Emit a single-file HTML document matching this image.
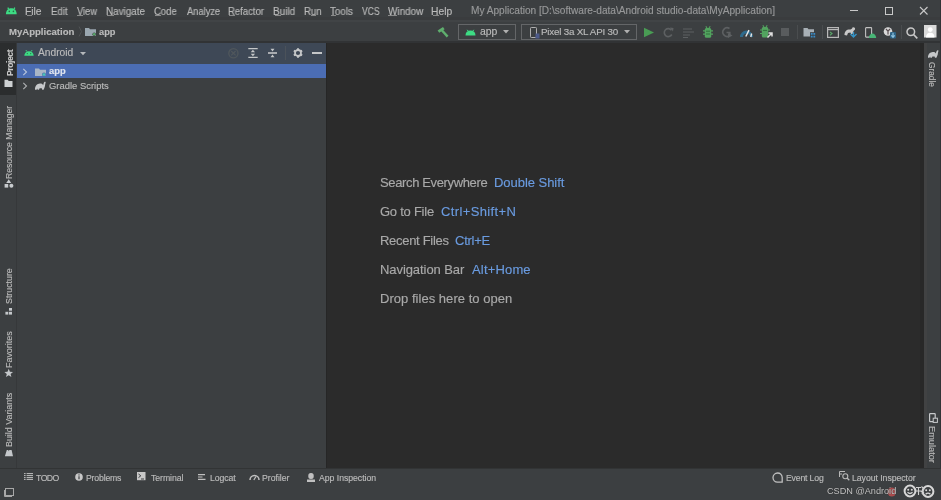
<!DOCTYPE html>
<html><head><meta charset="utf-8">
<style>
*{margin:0;padding:0;box-sizing:border-box}
html,body{width:941px;height:500px;overflow:hidden;background:#3c3f41;font-family:"Liberation Sans",sans-serif;color:#bbbbbb;position:relative}
.a{position:absolute}
.t{position:absolute;white-space:nowrap;line-height:1;will-change:transform;-webkit-text-stroke:0.15px currentColor}
svg{position:absolute;overflow:visible}
.vt{position:absolute;white-space:nowrap;line-height:1;transform-origin:0 0}
#tx38{-webkit-text-stroke:0;text-shadow:0 0 1px #222}
</style></head><body>
<!-- ===== title + menu bar ===== -->
<div class="a" style="left:0;top:0;width:941px;height:20px;background:#3c3f41"></div>
<div class="a" style="left:0;top:17px;width:941px;height:3px;background:#3a3c3e"></div>
<div class="a" style="left:0;top:20px;width:941px;height:2px;background:#414446"></div>
<svg style="left:5px;top:6px" width="13" height="9" viewBox="0 0 13 9">
<path d="M0.9 8.2 C1.1 4.6 2.8 2.3 6.3 2.3 C9.8 2.3 11.5 4.6 11.7 8.2 Z" fill="#3ddc84"/>
<path d="M2.7 1.6 L3.7 2.9 M9.9 1.6 L8.9 2.9" stroke="#3ddc84" stroke-width="1.3"/>
<circle cx="4.3" cy="5.4" r="0.8" fill="#2a6e48"/><circle cx="8.4" cy="5.4" r="0.8" fill="#2a6e48"/>
</svg>
<!-- mnemonic underlines -->
<div class="a" style="left:26.5px;top:15px;width:5px;height:1px;background:#8a8a8a"></div>
<div class="a" style="left:77px;top:15px;width:6px;height:1px;background:#8a8a8a"></div>
<div class="a" style="left:106.5px;top:15px;width:7px;height:1px;background:#8a8a8a"></div>
<div class="a" style="left:154.5px;top:15px;width:6px;height:1px;background:#8a8a8a"></div>
<div class="a" style="left:228.8px;top:15px;width:6px;height:1px;background:#8a8a8a"></div>
<div class="a" style="left:274.5px;top:15px;width:6px;height:1px;background:#8a8a8a"></div>
<div class="a" style="left:311px;top:15px;width:5px;height:1px;background:#8a8a8a"></div>
<div class="a" style="left:330.5px;top:15px;width:5px;height:1px;background:#8a8a8a"></div>
<div class="a" style="left:388.3px;top:15px;width:9px;height:1px;background:#8a8a8a"></div>
<div class="a" style="left:432.5px;top:15px;width:6px;height:1px;background:#8a8a8a"></div>
<!-- window controls -->
<div class="a" style="left:850px;top:10px;width:8px;height:1px;background:#c8c8c8"></div>
<div class="a" style="left:884.5px;top:6.8px;width:8px;height:7.8px;border:1.2px solid #c8c8c8"></div>
<svg style="left:919.5px;top:7px" width="7.5" height="7.5" viewBox="0 0 7.5 7.5"><path d="M0 0 L7.5 7.5 M7.5 0 L0 7.5" stroke="#c8c8c8" stroke-width="1.1"/></svg>

<!-- ===== navbar/toolbar ===== -->
<div class="a" style="left:0;top:41px;width:941px;height:2px;background:#313335"></div>
<svg style="left:78px;top:26px" width="5" height="11" viewBox="0 0 5 11"><path d="M1 0.5 L3.5 5.5 L1 10.5" stroke="#505355" stroke-width="1" fill="none"/></svg>
<svg style="left:85px;top:27px" width="12" height="10" viewBox="0 0 12 10">
<path d="M0 1 H4 L5 2.2 H11 V9 H0 Z" fill="#9aa7b0"/>
<circle cx="9.2" cy="7.3" r="1.8" fill="#3c3f41"/><circle cx="9.2" cy="7.3" r="1.3" fill="#59a869"/>
</svg>
<!-- hammer -->
<svg style="left:437px;top:26px" width="13" height="12" viewBox="0 0 13 12">
<path d="M0.6 4.6 L6 1 L7.6 3.2 L2.2 6.8 Z" fill="#5fae6e"/><path d="M4.6 4 L10.6 10.6" stroke="#5fae6e" stroke-width="2.4"/>
</svg>
<!-- app combo -->
<div class="a" style="left:458px;top:24px;width:58px;height:16px;border:1px solid #646668"></div>
<svg style="left:465px;top:29px" width="11" height="7" viewBox="0 0 11 7">
<path d="M0.5 6.5 C0.5 3.3 2.5 1.5 5.5 1.5 C8.5 1.5 10.5 3.3 10.5 6.5 Z" fill="#3ddc84"/>
<path d="M2.2 0.8 L3.1 2.1 M8.8 0.8 L7.9 2.1" stroke="#3ddc84" stroke-width="1"/>
</svg>
<svg style="left:503px;top:30px" width="6" height="4" viewBox="0 0 6 4"><path d="M0 0 H6 L3 3.5 Z" fill="#b0b0b0"/></svg>
<!-- device combo -->
<div class="a" style="left:521px;top:24px;width:116px;height:16px;border:1px solid #646668"></div>
<svg style="left:530px;top:27px" width="10" height="12" viewBox="0 0 10 12">
<rect x="0.5" y="0.5" width="6" height="10" rx="0.8" fill="none" stroke="#b0b0b0" stroke-width="1"/>
<rect x="5.5" y="6.5" width="4" height="5" fill="#4d5a8a"/>
</svg>
<svg style="left:624px;top:30px" width="6" height="4" viewBox="0 0 6 4"><path d="M0 0 H6 L3 3.5 Z" fill="#b0b0b0"/></svg>
<!-- run toolbar icons -->
<svg style="left:643px;top:27px" width="12" height="11" viewBox="0 0 12 11"><path d="M1 0.8 L11 5.5 L1 10.2 Z" fill="#499c54"/></svg>
<svg style="left:663px;top:27px" width="11" height="11" viewBox="0 0 11 11"><path d="M8.5 3.2 A4 4 0 1 0 8.8 7.5" stroke="#5d6062" stroke-width="1.6" fill="none"/><path d="M7 0.5 L10.5 1 L10 4.5 Z" fill="#5d6062"/></svg>
<svg style="left:683px;top:28px" width="11" height="10" viewBox="0 0 11 10"><path d="M0 1 H9 M0 4 H11 M0 7 H7 M0 9.5 H5" stroke="#5d6062" stroke-width="1.2"/></svg>
<svg style="left:703px;top:26px" width="10" height="12" viewBox="0 0 10 12">
<path d="M2.8 0.3 L4 2 M7.2 0.3 L6 2" stroke="#52a35f" stroke-width="1.1"/>
<rect x="1.8" y="2" width="6.4" height="9.8" rx="1.5" fill="#52a35f"/>
<path d="M0 4.8 H10 M0 8.2 H10" stroke="#52a35f" stroke-width="1.2"/>
<path d="M3 5.2 H7 M3 8 H7" stroke="#2f6a3a" stroke-width="0.9"/>
</svg>
<svg style="left:721px;top:27px" width="12" height="11" viewBox="0 0 12 11">
<path d="M8.5 1.5 A4.3 4.3 0 1 0 8.8 8.5 V5.5 H5.5" stroke="#5d6062" stroke-width="1.6" fill="none"/>
<path d="M7 6 L11.5 8.5 L7 11 Z" fill="#5d6062"/>
</svg>
<svg style="left:740px;top:27px" width="13" height="10" viewBox="0 0 13 10">
<path d="M1.5 10 A5 5 0 0 1 11.5 10" stroke="#2e6a8c" stroke-width="3" fill="none"/>
<path d="M5.8 9.5 L9 3.2" stroke="#e6e6e6" stroke-width="1.5"/>
<path d="M10.8 10 L11.6 6.5" stroke="#e6e6e6" stroke-width="1.4"/>
</svg>
<svg style="left:760px;top:25px" width="13" height="13" viewBox="0 0 13 13">
<path d="M2.8 0.3 L4 2 M7.2 0.3 L6 2" stroke="#52a35f" stroke-width="1.1"/>
<rect x="1.8" y="2" width="6.4" height="10.5" rx="1.5" fill="#52a35f"/>
<path d="M0 5 H10 M0 8.5 H7" stroke="#52a35f" stroke-width="1.2"/>
<path d="M3 5.4 H7" stroke="#2f6a3a" stroke-width="0.9"/>
<path d="M7.5 12.5 L11.5 8.5 M8.5 8 H12 V11.5" stroke="#e0e0e0" stroke-width="1.5" fill="none"/>
</svg>
<div class="a" style="left:781px;top:28px;width:8px;height:7.5px;background:#595c5e"></div>
<div class="a" style="left:797px;top:25px;width:1px;height:14px;background:#4a4d4f"></div>
<svg style="left:803px;top:27px" width="13" height="11" viewBox="0 0 13 11">
<path d="M0.5 1 H4.5 L5.5 2.3 H11 V9.5 H0.5 Z" fill="#a8b0b6"/>
<rect x="7" y="5.2" width="5.5" height="5.8" fill="#3c3f41"/>
<rect x="7.8" y="6" width="1.8" height="1.8" fill="#3a8cc7"/><rect x="10.4" y="6" width="1.8" height="1.8" fill="#3a8cc7"/>
<rect x="7.8" y="8.7" width="1.8" height="1.8" fill="#3a8cc7"/><rect x="10.4" y="8.7" width="1.8" height="1.8" fill="#3a8cc7"/>
</svg>
<div class="a" style="left:822px;top:25px;width:1px;height:14px;background:#4a4d4f"></div>
<svg style="left:827px;top:27px" width="12" height="11" viewBox="0 0 12 11">
<rect x="0.6" y="0.6" width="10.8" height="9.8" fill="none" stroke="#b8b8b8" stroke-width="1.2"/>
<path d="M0.6 2.6 H11.4" stroke="#b8b8b8" stroke-width="1.2"/>
<path d="M3 5 L5 6.6 L3 8.2" stroke="#59a869" stroke-width="1.1" fill="none"/>
</svg>
<svg style="left:844px;top:26px" width="13" height="12" viewBox="0 0 13 12">
<path d="M0.5 9 C0.5 5.5 2.5 3.5 5.5 3.5 C7 3.5 8 3 8.5 1.5 C10 1 11.5 2 11 3.5 L9.5 5 L8.5 8 L7 8 L6.5 6.5 L4 7 L3 9.5 Z" fill="#c8c8c8"/>
<path d="M6.5 8 L9.5 11 L12.5 8 M9.5 11 V6" stroke="#3592c4" stroke-width="1.4" fill="none"/>
</svg>
<svg style="left:865px;top:27px" width="11" height="11" viewBox="0 0 11 11">
<rect x="0.6" y="0.6" width="6" height="9.5" rx="0.6" fill="none" stroke="#c0c0c0" stroke-width="1.1"/>
<path d="M3.8 11 C4 8.2 5.8 6.6 7.5 6.6 C9.2 6.6 11 8.2 11.2 11 Z" fill="#48b576"/>
</svg>
<svg style="left:883px;top:27px" width="13" height="11" viewBox="0 0 13 11">
<circle cx="5" cy="4.5" r="4.3" fill="#d8d8d8"/>
<path d="M3 2 L5 4.2 L7 2 M5 4.2 V7.5" stroke="#5a4f52" stroke-width="1.2" fill="none"/>
<rect x="7" y="5" width="6" height="6.5" rx="1" fill="#2f6486"/><path d="M10 5.8 V10 M8.3 8.4 L10 10.3 L11.7 8.4" stroke="#8fc3e0" stroke-width="1.2" fill="none"/>
</svg>
<div class="a" style="left:901px;top:25px;width:1px;height:14px;background:#4a4d4f"></div>
<svg style="left:906px;top:27px" width="12" height="12" viewBox="0 0 12 12">
<circle cx="4.8" cy="4.8" r="3.8" fill="none" stroke="#c8c8c8" stroke-width="1.5"/>
<path d="M7.5 7.5 L11.3 11.3" stroke="#c8c8c8" stroke-width="1.7"/>
</svg>
<svg style="left:924px;top:25px" width="13" height="13" viewBox="0 0 13 13">
<rect x="0" y="0" width="12.5" height="12.5" fill="#d9d9d9"/>
<circle cx="6.25" cy="4.6" r="2.4" fill="#ffffff"/>
<path d="M2 12.5 C2 9 4 7.8 6.25 7.8 C8.5 7.8 10.5 9 10.5 12.5 Z" fill="#ffffff"/>
</svg>

<!-- ===== left stripe ===== -->
<div class="a" style="left:0;top:43px;width:16px;height:425px;background:#3c3f41"></div>
<div class="a" style="left:0;top:43px;width:16px;height:52px;background:#2b2d2e"></div>
<div class="a" style="left:16px;top:43px;width:1px;height:425px;background:#36383a"></div>

<!-- ===== project panel ===== -->
<div class="a" style="left:17px;top:43px;width:309px;height:425px;background:#3c3f41"></div>
<div class="a" style="left:17px;top:43px;width:309px;height:21px;background:#3e4856"></div>
<svg style="left:24px;top:49px" width="10" height="7" viewBox="0 0 10 7">
<path d="M0.3 6.8 C0.4 4 2.2 2.2 5 2.2 C7.8 2.2 9.6 4 9.7 6.8 Z" fill="#3ddc84"/>
<path d="M1.9 1.1 L2.9 2.5 M8.1 1.1 L7.1 2.5" stroke="#3ddc84" stroke-width="1"/>
<circle cx="3.3" cy="4.6" r="0.6" fill="#2a6e48"/><circle cx="6.7" cy="4.6" r="0.6" fill="#2a6e48"/>
</svg>
<svg style="left:79.5px;top:52px" width="6" height="4" viewBox="0 0 6 4"><path d="M0 0 H6 L3 3.3 Z" fill="#b5b8bb"/></svg>
<svg style="left:228px;top:47.5px" width="11" height="11" viewBox="0 0 11 11">
<circle cx="5.4" cy="5.2" r="4.6" fill="none" stroke="#50575c" stroke-width="1.3"/>
<path d="M3.2 3 L7.6 7.4 M7.6 3 L3.2 7.4" stroke="#50575c" stroke-width="1.2"/>
</svg>
<svg style="left:248px;top:48px" width="10" height="10" viewBox="0 0 10 10">
<path d="M0.3 0.6 H9.7 M0.3 9.4 H9.7" stroke="#c4c6c8" stroke-width="1.1"/>
<path d="M4.9 1.8 L2.7 4.3 H7.1 Z M4.9 8.2 L2.7 5.7 H7.1 Z" fill="#c4c6c8"/>
</svg>
<svg style="left:268px;top:48px" width="9" height="10" viewBox="0 0 9 10">
<path d="M0 5 H9" stroke="#c4c6c8" stroke-width="1.6"/>
<path d="M4.5 3.4 L2.5 0.8 H6.5 Z M4.5 6.6 L2.5 9.2 H6.5 Z" fill="#c4c6c8"/>
</svg>
<div class="a" style="left:285px;top:46px;width:1px;height:14px;background:#4b525a"></div>
<svg style="left:292.5px;top:48px" width="10" height="10" viewBox="0 0 10 10">
<circle cx="5" cy="5" r="3" fill="none" stroke="#c4c6c8" stroke-width="1.8"/>
<path d="M5 0.2 V2 M5 8 V9.8 M0.85 2.6 L2.4 3.5 M7.6 6.5 L9.15 7.4 M9.15 2.6 L7.6 3.5 M2.4 6.5 L0.85 7.4" stroke="#c4c6c8" stroke-width="2"/>
</svg>
<div class="a" style="left:312px;top:52px;width:9.5px;height:1.6px;background:#c4c6c8"></div>
<!-- tree -->
<div class="a" style="left:17px;top:64px;width:309px;height:14px;background:#4b6db4"></div>
<svg style="left:22px;top:67.5px" width="6" height="8" viewBox="0 0 6 8"><path d="M1.3 0.8 L4.5 4 L1.3 7.2" stroke="#b9c6dc" stroke-width="1.1" fill="none"/></svg>
<svg style="left:35px;top:68px" width="12" height="9" viewBox="0 0 12 9">
<path d="M0 0.5 H4 L5 1.7 H11 V8 H0 Z" fill="#a9b6c6"/>
<circle cx="9" cy="6.6" r="2" fill="#4b6eaf"/><circle cx="9" cy="6.6" r="1.4" fill="#49c7b7"/>
</svg>
<svg style="left:22px;top:82px" width="6" height="8" viewBox="0 0 6 8"><path d="M1.3 0.8 L4.5 4 L1.3 7.2" stroke="#aeb0b2" stroke-width="1.1" fill="none"/></svg>
<svg style="left:34px;top:81px" width="13" height="9" viewBox="0 0 13 9">
<path d="M1 8.8 C0.8 5.2 3 2.6 6 2.5 C7.6 2.4 8.6 3 9.2 4.2 C9.6 2.8 9.6 1.6 10.4 0.9 C11.2 0.5 11.9 1 11.6 1.8 C11.3 2.6 11.2 3.5 11 5 C10.6 6.5 10.2 7.5 9.6 8.8 H8.2 L7.8 7.2 H5.6 L5 8.8 H3.6 L3.3 7.4 L2.6 8.8 Z" fill="#c6c8ca"/>
</svg>

<!-- ===== editor ===== -->
<div class="a" style="left:326px;top:43px;width:598px;height:425px;background:#2b2b2b;border-left:1px solid #262626"></div>
<div class="a" style="left:920px;top:43px;width:4px;height:425px;background:#282828"></div>
<div class="a" style="left:924px;top:43px;width:17px;height:425px;background:#3c3f41"></div>
<div class="a" style="left:924px;top:43px;width:3px;height:425px;background:#414243"></div>
<div class="a" style="left:940px;top:0;width:1px;height:500px;background:#323436"></div>

<!-- ===== bottom ===== -->
<div class="a" style="left:0;top:468px;width:941px;height:1px;background:#323435"></div>
<div class="a" style="left:0;top:469px;width:941px;height:31px;background:#3c3f41"></div>
<svg style="left:24px;top:473px" width="9" height="7" viewBox="0 0 9 7">
<path d="M0 0.6 H1.6 M0 2.6 H1.6 M0 4.6 H1.6 M0 6.4 H1.6 M2.6 0.6 H9 M2.6 2.6 H9 M2.6 4.6 H9 M2.6 6.4 H9" stroke="#c0c0c0" stroke-width="1"/>
</svg>
<svg style="left:75px;top:473px" width="8" height="8" viewBox="0 0 8 8">
<circle cx="4" cy="4" r="3.8" fill="#c8c8c8"/><path d="M4 3.2 V6.3" stroke="#3c3f41" stroke-width="1.2"/><circle cx="4" cy="1.9" r="0.7" fill="#3c3f41"/>
</svg>
<svg style="left:137px;top:472px" width="9" height="9" viewBox="0 0 9 9">
<rect x="0" y="0" width="8.5" height="8.2" fill="#c8c8c8"/><path d="M1.5 2 L3.8 3.8 L1.5 5.6 M4 7 H7" stroke="#3c3f41" stroke-width="1" fill="none"/>
</svg>
<svg style="left:198px;top:474px" width="8" height="6" viewBox="0 0 8 6">
<path d="M0 0.6 H7 M0 3 H4.5 M0 5.4 H7.5" stroke="#c0c0c0" stroke-width="1.1"/>
</svg>
<svg style="left:249px;top:474px" width="11" height="6" viewBox="0 0 11 6">
<path d="M1 6 A4.5 4.5 0 0 1 10 6" stroke="#c0c0c0" stroke-width="1.5" fill="none"/><path d="M4.8 6 L7 2.5" stroke="#c0c0c0" stroke-width="1.2"/>
</svg>
<svg style="left:307px;top:473px" width="8" height="9" viewBox="0 0 8 9">
<rect x="1.3" y="0" width="5.4" height="6" rx="2.5" fill="#c0c0c0"/><rect x="0" y="6.5" width="8" height="2.5" fill="#c0c0c0"/>
</svg>
<svg style="left:772px;top:472px" width="11" height="11" viewBox="0 0 11 11">
<path d="M5.5 10.2 A4.6 4.6 0 1 1 10.2 5.5 V10.2 Z" fill="none" stroke="#c0c0c0" stroke-width="1.3"/>
</svg>
<svg style="left:839px;top:471px" width="11" height="10" viewBox="0 0 11 10">
<path d="M0.5 0.5 H6 M0.5 0.5 V6 M0.5 3 H3" stroke="#b8b8b8" stroke-width="1"/>
<circle cx="6.3" cy="5.3" r="2.5" fill="none" stroke="#b8b8b8" stroke-width="1.1"/>
<path d="M8 7 L10.3 9.3" stroke="#b8b8b8" stroke-width="1.3"/>
</svg>
<svg style="left:4px;top:488px" width="10" height="9" viewBox="0 0 10 9">
<rect x="1.5" y="0.5" width="8" height="7" fill="none" stroke="#a8a8a8" stroke-width="1"/>
<path d="M0.5 2 V8.5 H8" stroke="#a8a8a8" stroke-width="1" fill="none"/>
</svg>


<!-- left stripe icons -->
<svg style="left:4px;top:79px" width="10" height="9" viewBox="0 0 10 9">
<path d="M0.5 0.8 H3.6 L4.8 2 H8.5 V8 H0.5 Z" fill="#cdd0d2"/>
</svg>
<svg style="left:4px;top:179px" width="10" height="10" viewBox="0 0 10 10">
<path d="M4.7 0.2 L7.2 4 H2.2 Z" fill="#c8cbce"/>
<rect x="0.6" y="5" width="3.6" height="3.6" fill="#c8cbce"/>
<circle cx="7.4" cy="6.8" r="2" fill="#c8cbce"/>
</svg>
<svg style="left:5px;top:308px" width="8" height="8" viewBox="0 0 8 8">
<rect x="4" y="0" width="3" height="2.7" fill="#c4c7ca"/>
<rect x="0.4" y="3.8" width="2.9" height="2.8" fill="#c4c7ca"/>
<rect x="4" y="3.8" width="3" height="2.8" fill="#c4c7ca"/>
</svg>
<svg style="left:4px;top:368px" width="10" height="10" viewBox="0 0 10 10">
<path d="M4.7 0.8 L5.9 3.7 L9 3.9 L6.6 5.9 L7.4 9 L4.7 7.3 L2 9 L2.8 5.9 L0.4 3.9 L3.5 3.7 Z" fill="#c4c7ca"/>
</svg>
<svg style="left:4px;top:449px" width="10" height="8" viewBox="0 0 10 8">
<path d="M2.8 1 H4.2 L4.8 2.2 L5.4 1 H7.6 L9 7.3 H0.9 Z" fill="#c4c7ca"/>
</svg>
<!-- right stripe icons -->
<svg style="left:927px;top:49px" width="12" height="10" viewBox="0 0 12 10">
<path d="M1 8.8 C0.8 5.4 3 3.2 5.8 3.1 C7.3 3 8.2 3.5 8.8 4.5 C9.2 3.3 9.4 2.1 10.2 1.4 C11 1 11.7 1.4 11.4 2.2 C11.1 3 11 3.8 10.8 5.2 C10.4 6.6 10 7.6 9.4 8.8 H8 L7.6 7.4 H5.4 L4.8 8.8 H3.4 L3.1 7.5 L2.5 8.8 Z" fill="#c6c8ca"/>
</svg>
<svg style="left:929px;top:413px" width="9" height="10" viewBox="0 0 9 10">
<rect x="0.6" y="0.6" width="5.6" height="8" rx="0.6" fill="none" stroke="#c8cacc" stroke-width="1.2"/>
<rect x="4.2" y="5.2" width="4.2" height="4.2" fill="#3c3f41" stroke="#c8cacc" stroke-width="1"/>
</svg>

<!-- watermark -->
<svg style="left:887px;top:486.5px" width="10" height="10" viewBox="0 0 10 10"><ellipse cx="4.8" cy="5" rx="4.2" ry="4.6" fill="#c85050" fill-opacity="0.8"/></svg>
<svg style="left:903px;top:484px" width="32" height="14" viewBox="0 0 32 14">
<circle cx="7" cy="7" r="5.4" fill="none" stroke="#d8d8d8" stroke-width="2"/>
<circle cx="5.2" cy="5.8" r="1" fill="#d8d8d8"/><circle cx="8.8" cy="5.8" r="1" fill="#d8d8d8"/>
<path d="M4.5 8.3 Q7 10.8 9.5 8.3" stroke="#d8d8d8" stroke-width="1.3" fill="none"/>
<circle cx="25" cy="7.5" r="5.4" fill="none" stroke="#d8d8d8" stroke-width="2"/>
<circle cx="23.2" cy="6.2" r="1" fill="#d8d8d8"/><circle cx="26.8" cy="6.2" r="1" fill="#d8d8d8"/>
<path d="M22.6 10.2 Q25 8.2 27.4 10.2" stroke="#d8d8d8" stroke-width="1.3" fill="none"/>
<path d="M13 3.5 H18 M15.5 3.5 V11 M13 7 H18 M18.5 2.5 L20.5 4.5 M18 8 L21 4.8 M18.8 10 L21 8" stroke="#cfcfcf" stroke-width="1.1"/>
</svg>
<span id="tx0" class="t" style="left:25.36px;top:7px;font-size:10.2px;color:#bbbbbb;transform:scaleX(1.0101);transform-origin:0 0">File</span>
<span id="tx1" class="t" style="left:50.71px;top:7px;font-size:10.2px;color:#bbbbbb;transform:scaleX(0.9480);transform-origin:0 0">Edit</span>
<span id="tx2" class="t" style="left:76.86px;top:7px;font-size:10.2px;color:#bbbbbb;transform:scaleX(0.9174);transform-origin:0 0">View</span>
<span id="tx3" class="t" style="left:105.59px;top:7px;font-size:10.2px;color:#bbbbbb;transform:scaleX(0.9699);transform-origin:0 0">Navigate</span>
<span id="tx4" class="t" style="left:153.73px;top:7px;font-size:10.2px;color:#bbbbbb;transform:scaleX(0.9309);transform-origin:0 0">Code</span>
<span id="tx5" class="t" style="left:186.68px;top:7px;font-size:10.2px;color:#bbbbbb;transform:scaleX(0.9131);transform-origin:0 0">Analyze</span>
<span id="tx6" class="t" style="left:227.82px;top:7px;font-size:10.2px;color:#bbbbbb;transform:scaleX(0.9348);transform-origin:0 0">Refactor</span>
<span id="tx7" class="t" style="left:273.48px;top:7px;font-size:10.2px;color:#bbbbbb;transform:scaleX(0.9766);transform-origin:0 0">Build</span>
<span id="tx8" class="t" style="left:304.11px;top:7px;font-size:10.2px;color:#bbbbbb;transform:scaleX(0.9467);transform-origin:0 0">Run</span>
<span id="tx9" class="t" style="left:329.98px;top:7px;font-size:10.2px;color:#bbbbbb;transform:scaleX(0.9606);transform-origin:0 0">Tools</span>
<span id="tx10" class="t" style="left:362.17px;top:7px;font-size:10.2px;color:#bbbbbb;transform:scaleX(0.8353);transform-origin:0 0">VCS</span>
<span id="tx11" class="t" style="left:387.96px;top:7px;font-size:10.2px;color:#bbbbbb;transform:scaleX(0.9735);transform-origin:0 0">Window</span>
<span id="tx12" class="t" style="left:431.46px;top:7px;font-size:10.2px;color:#bbbbbb;transform:scaleX(1.0088);transform-origin:0 0">Help</span>
<span id="tx13" class="t" style="left:471.07px;top:6px;font-size:10.111px;color:#979899">My Application [D:\software-data\Android studio-data\MyApplication]</span>
<span id="tx14" class="t" style="left:9.07px;top:27px;font-size:9.574px;color:#bbbbbb;font-weight:bold">MyApplication</span>
<span id="tx15" class="t" style="left:98.53px;top:28px;font-size:9.251px;color:#bbbbbb;font-weight:bold">app</span>
<span id="tx16" class="t" style="left:479.56px;top:27px;font-size:10.41px;color:#bbbbbb">app</span>
<span id="tx17" class="t" style="left:541.20px;top:27px;font-size:9.8px;color:#bbbbbb;letter-spacing:-0.214px">Pixel 3a XL API 30</span>
<span id="tx18" class="t" style="left:37.78px;top:48px;font-size:10.234px;color:#bbbbbb">Android</span>
<span id="tx19" class="t" style="left:48.73px;top:67px;font-size:9.368px;color:#dfe4ee;font-weight:bold">app</span>
<span id="tx20" class="t" style="left:49.03px;top:81px;font-size:9.442px;color:#bbbbbb">Gradle Scripts</span>
<span id="tx21" class="t" style="left:380.12px;top:176px;font-size:13px;color:#a9a9a9;letter-spacing:-0.361px">Search Everywhere</span>
<span id="tx22" class="t" style="left:494.33px;top:176px;font-size:13px;color:#6a9be0;letter-spacing:-0.042px">Double Shift</span>
<span id="tx23" class="t" style="left:380.05px;top:205px;font-size:13px;color:#a9a9a9;letter-spacing:-0.248px">Go to File</span>
<span id="tx24" class="t" style="left:440.75px;top:205px;font-size:13px;color:#6a9be0;letter-spacing:0.373px">Ctrl+Shift+N</span>
<span id="tx25" class="t" style="left:379.63px;top:234px;font-size:13px;color:#a9a9a9;letter-spacing:-0.302px">Recent Files</span>
<span id="tx26" class="t" style="left:455.35px;top:234px;font-size:13px;color:#6a9be0;letter-spacing:-0.256px">Ctrl+E</span>
<span id="tx27" class="t" style="left:379.63px;top:263px;font-size:13px;color:#a9a9a9;letter-spacing:-0.073px">Navigation Bar</span>
<span id="tx28" class="t" style="left:471.57px;top:263px;font-size:13px;color:#6a9be0;letter-spacing:0.166px">Alt+Home</span>
<span id="tx29" class="t" style="left:379.63px;top:292px;font-size:13px;color:#a9a9a9;letter-spacing:0.031px">Drop files here to open</span>
<span id="tx30" class="t" style="left:36.21px;top:474px;font-size:8.7px;color:#bbbbbb;letter-spacing:-0.523px">TODO</span>
<span id="tx31" class="t" style="left:86.49px;top:474px;font-size:8.7px;color:#bbbbbb;letter-spacing:-0.175px">Problems</span>
<span id="tx32" class="t" style="left:150.51px;top:474px;font-size:8.7px;color:#bbbbbb;letter-spacing:-0.045px">Terminal</span>
<span id="tx33" class="t" style="left:210.09px;top:474px;font-size:8.7px;color:#bbbbbb;letter-spacing:-0.090px">Logcat</span>
<span id="tx34" class="t" style="left:262.19px;top:474px;font-size:8.7px;color:#bbbbbb;letter-spacing:-0.001px">Profiler</span>
<span id="tx35" class="t" style="left:319.38px;top:474px;font-size:8.7px;color:#bbbbbb;letter-spacing:-0.030px">App Inspection</span>
<span id="tx36" class="t" style="left:785.59px;top:474px;font-size:8.7px;color:#bbbbbb;letter-spacing:-0.176px">Event Log</span>
<span id="tx37" class="t" style="left:851.89px;top:474px;font-size:8.7px;color:#bbbbbb;letter-spacing:-0.038px">Layout Inspector</span>
<span id="tx38" class="t" style="left:826.84px;top:487px;font-size:9.157px;color:#c4c4c4">CSDN @Android</span>
<span id="tx39" class="t" style="left:6px;top:75.57px;font-size:8.6px;color:#c8c8c8;transform:rotate(-90deg);transform-origin:0 0;font-weight:bold;letter-spacing:-0.431px">Project</span>
<span id="tx40" class="t" style="left:5px;top:178.71px;font-size:8.625px;color:#bbbbbb;transform:rotate(-90deg);transform-origin:0 0">Resource Manager</span>
<span id="tx41" class="t" style="left:5px;top:304.40px;font-size:8.821px;color:#bbbbbb;transform:rotate(-90deg);transform-origin:0 0">Structure</span>
<span id="tx42" class="t" style="left:5px;top:367.73px;font-size:8.938px;color:#bbbbbb;transform:rotate(-90deg);transform-origin:0 0">Favorites</span>
<span id="tx43" class="t" style="left:5px;top:447.33px;font-size:8.899px;color:#bbbbbb;transform:rotate(-90deg);transform-origin:0 0">Build Variants</span>
<span id="tx44" class="t" style="left:936px;top:62.38px;font-size:8.325px;color:#bbbbbb;transform:rotate(90deg);transform-origin:0 0">Gradle</span>
<span id="tx45" class="t" style="left:936px;top:426.24px;font-size:9.224px;color:#bbbbbb;transform:rotate(90deg);transform-origin:0 0">Emulator</span>
</body></html>
